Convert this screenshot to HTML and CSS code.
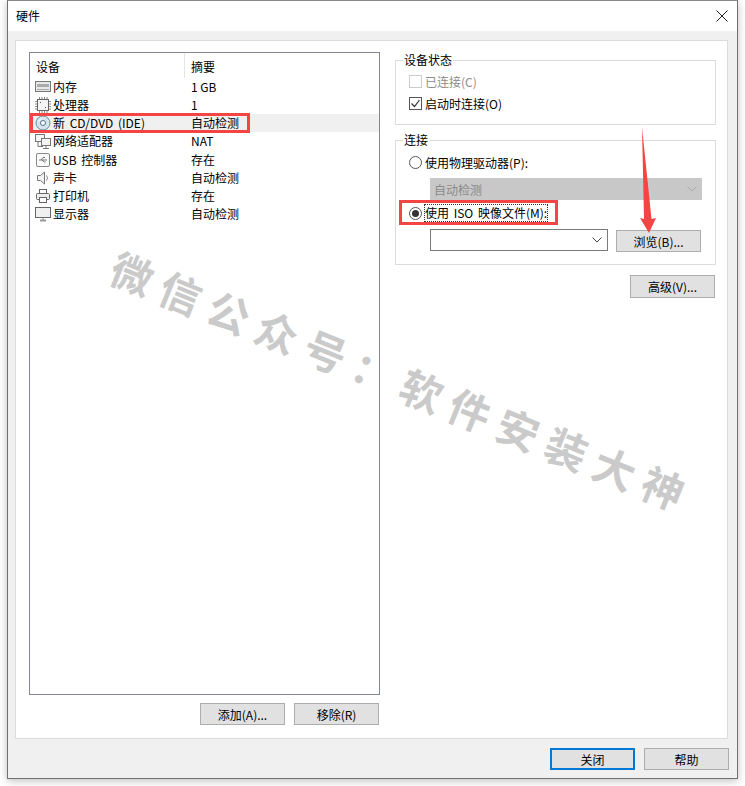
FILE: index.html
```html
<!DOCTYPE html>
<html lang="zh-CN">
<head>
    <meta charset="UTF-8">
    <title>硬件</title>
    <link rel="stylesheet" href="styles.css">
</head>
<body>
    <div class="dialog">
        <div class="titlebar">
            <span class="title">硬件</span>
            <svg class="close-x" width="12" height="12" viewBox="0 0 12 12"><path d="M.5.5l11 11M11.5.5l-11 11" stroke="#222" fill="none"/></svg>
        </div>
        <div class="content">
            <div class="panel">
                <div class="left-col">
                    <div class="device-list">
                        <div class="list-head">
                            <span class="head-cell">设备</span>
                            <span class="head-cell head-second">摘要</span>
                        </div>
                        <div class="row">
                            <span class="dev">
                                <svg class="ico" viewBox="0 0 16 16"><rect x=".5" y="2.5" width="15" height="10" fill="#e8e8e8" stroke="#777"/><rect x="2" y="5" width="12" height="3" fill="#aaa"/><path d="M2 10.5h12" stroke="#aaa"/></svg>
                                <span>内存</span>
                            </span>
                            <span>1 GB</span>
                        </div>
                        <div class="row">
                            <span class="dev">
                                <svg class="ico" viewBox="0 0 16 16"><rect x="2.500" y="2.500" width="11" height="11" fill="#f4f4f4" stroke="#666"/><path d="M4.500 0v2M7 0v2M9.500 0v2M12 0v2M4.500 14v2M7 14v2M9.500 14v2M12 14v2M0 4.500h2M0 7h2M0 9.500h2M0 12h2M14 4.500h2M14 7h2M14 9.500h2M14 12h2" stroke="#888" fill="none"/><path d="M5 5h1v1H5zM10 10h1v1h-1z" fill="#555"/></svg>
                                <span>处理器</span>
                            </span>
                            <span>1</span>
                        </div>
                        <div class="row row-selected">
                            <span class="dev">
                                <svg class="ico" viewBox="0 0 16 16"><circle cx="8" cy="8" r="7" fill="#d5e4ee" stroke="#6f8b9e"/><circle cx="8" cy="8" r="2.500" fill="#fff" stroke="#4f7389"/><path d="M3.500 6.500A5 5 0 0 1 6.500 3.500" stroke="#fff" fill="none"/></svg>
                                <span>新 CD/DVD (IDE)</span>
                            </span>
                            <span>自动检测</span>
                        </div>
                        <div class="row">
                            <span class="dev">
                                <svg class="ico" viewBox="0 0 16 16"><rect x=".5" y="1.500" width="9" height="7" fill="#f5f5f5" stroke="#777"/><rect x="6.500" y="5.500" width="9" height="7" fill="#f5f5f5" stroke="#777"/><path d="M3 8.500v5h5M11 12.500v2.500M8 15.500h6" stroke="#777" fill="none"/></svg>
                                <span>网络适配器</span>
                            </span>
                            <span>NAT</span>
                        </div>
                        <div class="row">
                            <span class="dev">
                                <svg class="ico" viewBox="0 0 16 16"><rect x="1.500" y="1.500" width="13" height="13" rx="1.500" fill="#fafafa" stroke="#888"/><path d="M4 8h8M6 8l2-2.500h2M7 8l2 2h1.500" stroke="#777" fill="none"/></svg>
                                <span>USB 控制器</span>
                            </span>
                            <span>存在</span>
                        </div>
                        <div class="row">
                            <span class="dev">
                                <svg class="ico" viewBox="0 0 16 16"><path d="M2.500 5.500h3l4-3.500v12l-4-3.500h-3z" fill="#f2f2f2" stroke="#777"/><path d="M11.500 5.500a4 4 0 0 1 0 5" stroke="#888" fill="none"/></svg>
                                <span>声卡</span>
                            </span>
                            <span>自动检测</span>
                        </div>
                        <div class="row">
                            <span class="dev">
                                <svg class="ico" viewBox="0 0 16 16"><rect x="4.500" y="1.500" width="7" height="4" fill="#fff" stroke="#666"/><rect x="1.500" y="5.500" width="13" height="6" rx="1" fill="#eee" stroke="#666"/><rect x="4.500" y="9.500" width="7" height="5" fill="#fff" stroke="#666"/></svg>
                                <span>打印机</span>
                            </span>
                            <span>存在</span>
                        </div>
                        <div class="row">
                            <span class="dev">
                                <svg class="ico" viewBox="0 0 16 16"><rect x=".5" y="1.500" width="15" height="10" fill="#f0f0f0" stroke="#666"/><path d="M5 14.500h6" stroke="#999" stroke-width="2"/><path d="M8 12v2" stroke="#999"/></svg>
                                <span>显示器</span>
                            </span>
                            <span>自动检测</span>
                        </div>
                    </div>
                    <div class="btn-row">
                        <button class="btn">添加(A)...</button>
                        <button class="btn">移除(R)</button>
                    </div>
                </div>

                <div class="right-col">
                    <fieldset class="group group-status">
                        <legend>设备状态</legend>
                        <div class="opt opt-disabled"><span class="check"></span>已连接(C)</div>
                        <div class="opt">
                            <span class="check">
                                <svg width="11" height="11" viewBox="0 0 11 11"><path d="M1.500 5.500l3 3 5-6.500" stroke="#333" stroke-width="1.200" fill="none"/></svg>
                            </span>
                            启动时连接(O)
                        </div>
                    </fieldset>
                    <fieldset class="group group-conn">
                        <legend>连接</legend>
                        <div class="opt"><span class="radio"></span>使用物理驱动器(P):</div>
                        <div class="select select-disabled">
                            <span>自动检测</span>
                            <svg width="10" height="6" viewBox="0 0 10 6"><path d="M.5.500L5 5l4.500-4.500" stroke="#aaa" fill="none"/></svg>
                        </div>
                        <div class="opt opt-iso"><span class="radio radio-on"></span><span class="focus-label">使用 ISO 映像文件(M):</span></div>
                        <div class="iso-row">
                            <div class="select select-iso">
                                <span></span>
                                <svg width="10" height="6" viewBox="0 0 10 6"><path d="M.5.500L5 5l4.500-4.500" stroke="#444" fill="none"/></svg>
                            </div>
                            <button class="btn">浏览(B)...</button>
                        </div>
                    </fieldset>
                    <div class="adv-row">
                        <button class="btn">高级(V)...</button>
                    </div>
                </div>
            </div>
            <div class="footer">
                <button class="btn btn-default">关闭</button>
                <button class="btn">帮助</button>
            </div>
        </div>
    </div>

    <!-- annotations drawn on top of the screenshot -->
    <div class="mark mark-cd"></div>
    <div class="mark mark-iso"></div>
    <svg class="arrow" width="20" height="110" viewBox="0 0 20 110"><path d="M4 1L13.500 93 18 92 11 107 2 92 6 93z" fill="#f44444"/></svg>
    <div class="watermark">微信公众号：软件安装大神</div>
</body>
</html>
```

FILE: styles.css
```css
body {
    margin: 0;
    width: 745px;
    height: 786px;
    background: #fff;
    position: relative;
    overflow: hidden;
    font-family: "Noto Sans CJK SC", "Liberation Sans", sans-serif;
    font-size: 12px;
    color: #000;
}
.dialog {
    box-sizing: border-box;
    width: 731px;
    height: 779px;
    margin-left: 7px;
    border: 1px solid #707070;
    border-top-color: #888;
    box-shadow: 0 2px 8px rgba(0, 0, 0, 0.25);
    display: flex;
    flex-direction: column;
}
.titlebar {
    height: 30px;
    background: #fff;
    display: flex;
    align-items: center;
    justify-content: space-between;
    padding: 0 9px 0 8px;
}
.title {
    margin-top: -1px;
}
.content {
    flex: 1;
    background: #f0f0f0;
    padding: 9px 9px 0 7px;
    display: flex;
    flex-direction: column;
}
.panel {
    box-sizing: border-box;
    height: 699px;
    background: #fff;
    border: 1px solid #dcdcdc;
    padding: 11px 0 0 13px;
    display: flex;
    gap: 15px;
}
.left-col {
    width: 351px;
}
.device-list {
    box-sizing: border-box;
    height: 643px;
    border: 1px solid #828790;
}
.list-head {
    display: flex;
    height: 25px;
}
.head-cell {
    padding: 2px 0 0 6px;
    height: 23px;
    line-height: 23px;
    width: 148px;
}
.head-second {
    border-left: 1px solid #e5e5e5;
}
.row {
    display: grid;
    grid-template-columns: 161px 1fr;
    height: 18.15px;
    line-height: 18px;
    align-items: center;
}
.row-selected {
    background: #f0f0f0;
}
.dev {
    display: flex;
    align-items: center;
    gap: 2px;
    padding-left: 5px;
    word-spacing: 2px;
}
.ico {
    width: 16px;
    height: 16px;
    flex: none;
}
.btn-row {
    display: flex;
    justify-content: flex-end;
    gap: 9px;
    margin: 8px 1px 0 0;
}
.btn {
    box-sizing: border-box;
    width: 85px;
    height: 22px;
    padding: 0;
    background: #e1e1e1;
    border: 1px solid #adadad;
    font: inherit;
    color: #000;
}
.btn-default {
    border: 2px solid #0078d7;
}
.right-col {
    width: 321px;
}
.group {
    margin: 0;
    padding: 0;
    border: 1px solid #dcdcdc;
}
.group legend {
    margin-left: 7px;
    padding: 0 1px;
    line-height: 16px;
}
.group-status {
    height: 73px;
    box-sizing: border-box;
    padding-top: 2px;
}
.group-status .opt {
    margin-left: 13px;
}
.group-conn {
    box-sizing: border-box;
    height: 133px;
    margin-top: 7px;
    padding-top: 3px;
}
.group-conn .opt {
    margin-left: 13px;
}
.opt {
    display: flex;
    align-items: center;
    gap: 3px;
    height: 22px;
}
.opt-disabled {
    color: #8c8c8c;
}
.check {
    box-sizing: border-box;
    width: 13px;
    height: 13px;
    border: 1px solid #555;
    display: flex;
    align-items: center;
    justify-content: center;
    background: #fff;
}
.opt-disabled .check {
    border-color: #ccc;
}
.radio {
    box-sizing: border-box;
    width: 13px;
    height: 13px;
    border: 1px solid #555;
    border-radius: 50%;
    background: #fff;
    display: flex;
    align-items: center;
    justify-content: center;
}
.radio-on::after {
    content: "";
    width: 7px;
    height: 7px;
    border-radius: 50%;
    background: #333;
}
.select {
    box-sizing: border-box;
    display: flex;
    align-items: center;
    justify-content: space-between;
    height: 22px;
    padding: 0 5px 0 4px;
}
.select-disabled {
    width: 272px;
    margin: 5px 0 0 34px;
    background: #c8c8c8;
    color: #8a8a8a;
}
.select-iso {
    width: 178px;
    background: #fff;
    border: 1px solid #7a7a7a;
}
.opt-iso {
    margin-top: 2px;
}
.focus-label {
    outline: 1px dotted #333;
    line-height: 16px;
    word-spacing: 2px;
}
.iso-row {
    display: flex;
    align-items: flex-start;
    gap: 8px;
    margin: 5px 0 0 34px;
}
.iso-row .btn {
    margin-top: 1px;
}
.adv-row {
    display: flex;
    justify-content: flex-end;
    margin: 10px 1px 0 0;
}
.adv-row .btn {
    height: 23px;
}
.footer {
    display: flex;
    justify-content: flex-end;
    gap: 9px;
    margin: 9px -1px 0 0;
}
.mark {
    position: absolute;
    box-sizing: border-box;
    border: 3px solid #f44444;
}
.mark-cd {
    left: 30px;
    top: 113px;
    width: 220px;
    height: 20px;
}
.mark-iso {
    left: 399px;
    top: 200px;
    width: 159px;
    height: 25px;
}
.arrow {
    position: absolute;
    left: 638px;
    top: 126px;
}
.watermark {
    position: absolute;
    left: 403px;
    top: 381px;
    transform: translate(-50%, -50%) rotate(22deg);
    white-space: nowrap;
    font-size: 42px;
    font-weight: 700;
    letter-spacing: 10px;
    color: #cacaca;
    pointer-events: none;
}
```
